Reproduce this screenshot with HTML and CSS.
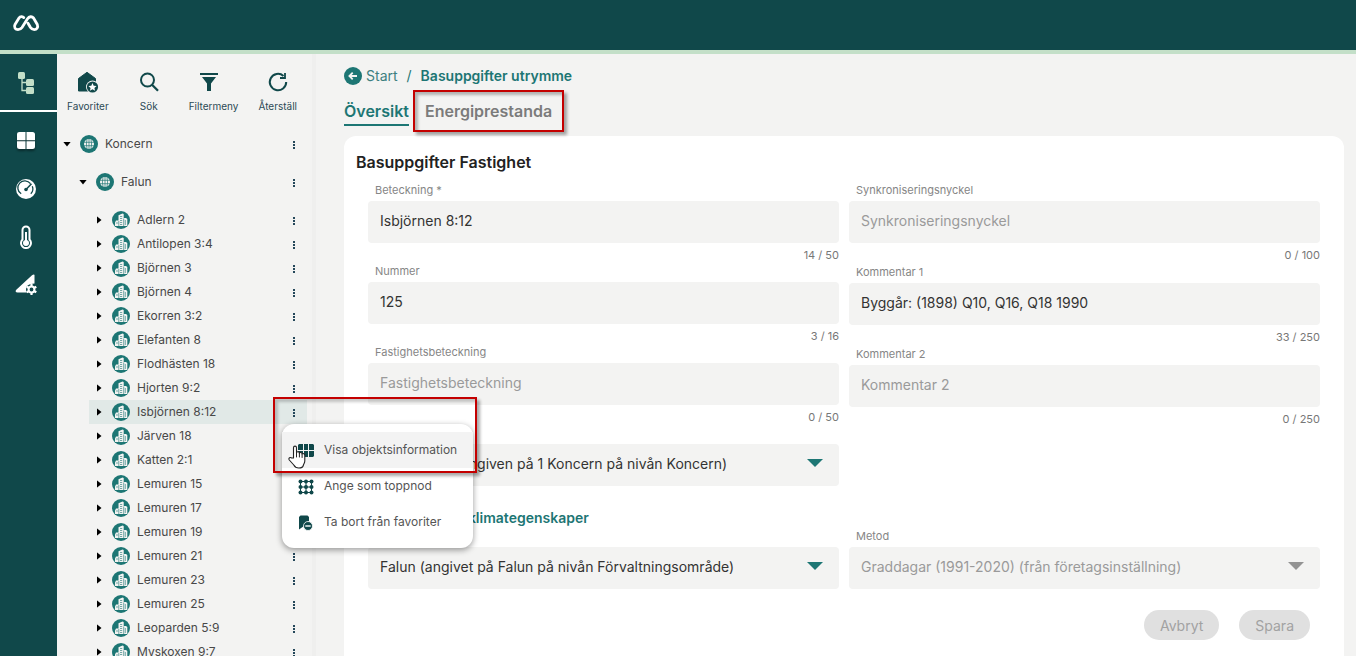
FILE: index.html
```html
<!DOCTYPE html>
<html lang="sv">
<head>
<meta charset="utf-8">
<meta name="viewport" content="width=device-width, initial-scale=1">
<title>Basuppgifter utrymme</title>
<link rel="stylesheet" href="styles.css">
</head>
<body>
<svg class="sprite" aria-hidden="true">
  <symbol id="globe" viewBox="0 0 18 18">
    <circle cx="9" cy="9" r="9" fill="#1d7674"/>
    <circle cx="9" cy="9" r="5" fill="#f3f3f2"/>
    <path d="M4 7.300h10M4 10.700h10M9 4v10M7 4.500Q5.800 9 7 13.500M11 4.500Q12.200 9 11 13.500" fill="none" stroke="#1d7674" stroke-width=".7"/>
  </symbol>
  <symbol id="building" viewBox="0 0 18 18">
    <circle cx="9" cy="9" r="9" fill="#1d7674"/>
    <path d="M6.500 9.500V4.300l4-1.800 1.200.6V7h2.300l1.300 1V15H3V11.500l1-2h2.500z" fill="#f3f3f2"/>
    <path d="M8 5.500h2.200M8 7.500h2.200M8 9.500h2.200M8 11.500h2.200M13.300 9v5M4 12h2.200M11.700 7.500v7.500M6.800 10v5M8 13.500h2.200" fill="none" stroke="#1d7674" stroke-width=".6"/>
  </symbol>
  <symbol id="dots" viewBox="0 0 2 8">
    <path d="M0 0h2v2H0zM0 3h2v2H0zM0 6h2v2H0z" fill="#24475a"/>
  </symbol>
</svg>

<div class="app">
  <header class="topbar">
    <svg class="logo" viewBox="0 0 28 18" aria-label="Logotyp" role="img">
      <g fill="none" stroke="#fff" stroke-width="2.800" stroke-linejoin="round" stroke-linecap="round">
        <path d="M11.800 3.600C10.800 2.200 8.200 2.200 7 4L3 10.500C1.500 13.500 3.500 15.600 6 15.600C8 15.600 9 15 10 13.500L15.500 4.800C17.300 2.200 20 2.200 21.500 4L25.300 10.500C26.500 13.500 24.500 15.600 22.300 15.600C20.500 15.600 19.500 15 18.500 13.500L16 9.200"/>
      </g>
    </svg>
  </header>

  <div class="body">
    <nav class="rail" aria-label="Huvudmeny">
      <a href="#" class="rail-item active" aria-label="Objektträd">
        <svg width="18" height="22" viewBox="0 0 18 22"><g fill="#c3dfc8"><rect x="1" y="0" width="7" height="7" rx="1.500"/><rect x="9" y="7" width="8" height="7" rx="1.500"/><rect x="9" y="15" width="8" height="7" rx="1.500"/></g><path d="M5 7v11.500h5M5 10.500h5" fill="none" stroke="#c3dfc8" stroke-width="1.300"/></svg>
      </a>
      <a href="#" class="rail-item" aria-label="Översikt">
        <svg class="lifted" width="18" height="18" viewBox="0 0 18 18" fill="#fff"><path d="M2.500 0h6v8.300H0V2.500A2.500 2.500 0 0 1 2.500 0zM9.500 0h6A2.500 2.500 0 0 1 18 2.500v5.800H9.500zM0 9.300h8.500V17h-6A2.500 2.500 0 0 1 0 14.500zM9.500 9.300H18v5.200a2.500 2.500 0 0 1-2.500 2.500h-6z"/></svg>
      </a>
      <a href="#" class="rail-item" aria-label="Mätare">
        <svg width="20" height="20" viewBox="0 0 20 20"><circle cx="10" cy="10" r="10" fill="#fff"/><path d="M5.200 14.800A7 7 0 1 1 14.500 4.700M16.300 7.200A7 7 0 0 1 14.800 14.800" fill="none" stroke="#10484a" stroke-width="1.300"/><path d="M10 10.500l5.500-5.800" stroke="#10484a" stroke-width="1.500"/><circle cx="10" cy="10.500" r="1.800" fill="#10484a"/></svg>
      </a>
      <a href="#" class="rail-item" aria-label="Temperatur">
        <svg width="14" height="24" viewBox="0 0 14 24"><path d="M3.500 5a3.500 3.500 0 0 1 7 0v9.500a5 5 0 1 1-7 0z" fill="none" stroke="#fff" stroke-width="2"/><path d="M7 7v10" stroke="#fff" stroke-width="2"/><circle cx="7" cy="18" r="3" fill="#fff"/></svg>
      </a>
      <a href="#" class="rail-item" aria-label="Inställningar">
        <svg width="22" height="22" viewBox="0 0 22 22"><path d="M19.500 1v8.500c-5 0-7.500 3-7 9H2.500c-2 0-2.500-1.500-1.200-2.700L17 1.300c1-1 2.500-1.200 2.500-.3z" fill="#fff"/><circle cx="16.500" cy="15.500" r="5.500" fill="#10484a"/><circle cx="16.500" cy="15.500" r="2.900" fill="none" stroke="#fff" stroke-width="2"/><path d="M16.500 10v2.500M16.500 18.500V21M11.700 12.700l2.300 1.300M19 17l2.300 1.300M11.700 18.300L14 17M19 14l2.300-1.300" stroke="#fff" stroke-width="2.200"/></svg>
      </a>
    </nav>

    <aside class="tree-panel">
      <div class="tools">
        <div class="tool-group">
          <button type="button" class="tool"><svg width="22" height="22" viewBox="0 0 22 22"><path d="M1.500 20V7.500L10 1.300 18.500 7.500V20z" fill="#10484a" stroke="#10484a" stroke-linejoin="round"/><circle cx="15.500" cy="16" r="6.500" fill="#f3f3f2"/><circle cx="15.500" cy="16" r="5.600" fill="#10484a"/><path d="M15.500 12l1.200 2.700 2.900.3-2.200 1.900.7 2.900-2.600-1.500-2.600 1.500.7-2.900-2.200-1.900 2.900-.3z" fill="#fff"/></svg>Favoriter</button>
          <button type="button" class="tool"><svg width="22" height="22" viewBox="0 0 22 22"><circle cx="9.500" cy="9" r="6.500" fill="none" stroke="#10484a" stroke-width="2"/><path d="M14 13.700l6 6" stroke="#10484a" stroke-width="2.300"/></svg>Sök</button>
          <button type="button" class="tool"><svg width="28" height="22" viewBox="0 0 28 22"><path d="M0 2h18v2H0zM2 6h14l-5 6.500V20H7v-7.500z" fill="#10484a"/></svg>Filtermeny</button>
        </div>
        <button type="button" class="tool"><svg width="22" height="22" viewBox="0 0 22 22"><path d="M16.500 5A8.200 8.200 0 1 0 19.200 11" fill="none" stroke="#10484a" stroke-width="2"/><path d="M18 2v5h-5" fill="none" stroke="#10484a" stroke-width="1.800"/></svg>Återställ</button>
      </div>

      <ul class="tree">
        <li class="node root"><span class="caret open"></span><svg class="ico"><use href="#globe"/></svg><span class="name">Koncern</span><button type="button" class="more" aria-label="Meny"><svg><use href="#dots"/></svg></button></li>
        <li class="node area"><span class="caret open"></span><svg class="ico"><use href="#globe"/></svg><span class="name">Falun</span><button type="button" class="more" aria-label="Meny"><svg><use href="#dots"/></svg></button></li>
        <li class="node"><span class="caret"></span><svg class="ico"><use href="#building"/></svg><span class="name">Adlern 2</span><button type="button" class="more" aria-label="Meny"><svg><use href="#dots"/></svg></button></li>
        <li class="node"><span class="caret"></span><svg class="ico"><use href="#building"/></svg><span class="name">Antilopen 3:4</span><button type="button" class="more" aria-label="Meny"><svg><use href="#dots"/></svg></button></li>
        <li class="node"><span class="caret"></span><svg class="ico"><use href="#building"/></svg><span class="name">Björnen 3</span><button type="button" class="more" aria-label="Meny"><svg><use href="#dots"/></svg></button></li>
        <li class="node"><span class="caret"></span><svg class="ico"><use href="#building"/></svg><span class="name">Björnen 4</span><button type="button" class="more" aria-label="Meny"><svg><use href="#dots"/></svg></button></li>
        <li class="node"><span class="caret"></span><svg class="ico"><use href="#building"/></svg><span class="name">Ekorren 3:2</span><button type="button" class="more" aria-label="Meny"><svg><use href="#dots"/></svg></button></li>
        <li class="node"><span class="caret"></span><svg class="ico"><use href="#building"/></svg><span class="name">Elefanten 8</span><button type="button" class="more" aria-label="Meny"><svg><use href="#dots"/></svg></button></li>
        <li class="node"><span class="caret"></span><svg class="ico"><use href="#building"/></svg><span class="name">Flodhästen 18</span><button type="button" class="more" aria-label="Meny"><svg><use href="#dots"/></svg></button></li>
        <li class="node"><span class="caret"></span><svg class="ico"><use href="#building"/></svg><span class="name">Hjorten 9:2</span><button type="button" class="more" aria-label="Meny"><svg><use href="#dots"/></svg></button></li>
        <li class="node selected"><span class="caret"></span><svg class="ico"><use href="#building"/></svg><span class="name">Isbjörnen 8:12</span><button type="button" class="more" aria-label="Meny"><svg><use href="#dots"/></svg></button></li>
        <li class="node"><span class="caret"></span><svg class="ico"><use href="#building"/></svg><span class="name">Järven 18</span><button type="button" class="more" aria-label="Meny"><svg><use href="#dots"/></svg></button></li>
        <li class="node"><span class="caret"></span><svg class="ico"><use href="#building"/></svg><span class="name">Katten 2:1</span><button type="button" class="more" aria-label="Meny"><svg><use href="#dots"/></svg></button></li>
        <li class="node"><span class="caret"></span><svg class="ico"><use href="#building"/></svg><span class="name">Lemuren 15</span><button type="button" class="more" aria-label="Meny"><svg><use href="#dots"/></svg></button></li>
        <li class="node"><span class="caret"></span><svg class="ico"><use href="#building"/></svg><span class="name">Lemuren 17</span><button type="button" class="more" aria-label="Meny"><svg><use href="#dots"/></svg></button></li>
        <li class="node"><span class="caret"></span><svg class="ico"><use href="#building"/></svg><span class="name">Lemuren 19</span><button type="button" class="more" aria-label="Meny"><svg><use href="#dots"/></svg></button></li>
        <li class="node"><span class="caret"></span><svg class="ico"><use href="#building"/></svg><span class="name">Lemuren 21</span><button type="button" class="more" aria-label="Meny"><svg><use href="#dots"/></svg></button></li>
        <li class="node"><span class="caret"></span><svg class="ico"><use href="#building"/></svg><span class="name">Lemuren 23</span><button type="button" class="more" aria-label="Meny"><svg><use href="#dots"/></svg></button></li>
        <li class="node"><span class="caret"></span><svg class="ico"><use href="#building"/></svg><span class="name">Lemuren 25</span><button type="button" class="more" aria-label="Meny"><svg><use href="#dots"/></svg></button></li>
        <li class="node"><span class="caret"></span><svg class="ico"><use href="#building"/></svg><span class="name">Leoparden 5:9</span><button type="button" class="more" aria-label="Meny"><svg><use href="#dots"/></svg></button></li>
        <li class="node"><span class="caret"></span><svg class="ico"><use href="#building"/></svg><span class="name">Myskoxen 9:7</span><button type="button" class="more" aria-label="Meny"><svg><use href="#dots"/></svg></button></li>
      </ul>
    </aside>

    <main class="content">
      <nav class="crumbs" aria-label="Brödsmulor">
        <a href="#" class="crumb-link"><svg width="18" height="18" viewBox="0 0 18 18"><circle cx="9" cy="9" r="9" fill="#1d7674"/><path d="M13 9H5.500M8.700 5.700L5.400 9l3.300 3.300" fill="none" stroke="#f3f3f2" stroke-width="1.800"/></svg>Start</a>
        <span class="sep">/</span>
        <a href="#" class="crumb-current">Basuppgifter utrymme</a>
      </nav>
      <nav class="tabs" aria-label="Flikar">
        <a href="#" class="tab current">Översikt</a>
        <a href="#" class="tab marked">Energiprestanda</a>
      </nav>

      <form class="card">
        <h1 class="title">Basuppgifter Fastighet</h1>
        <div class="columns">
          <div class="column">
            <div class="field"><label for="f1">Beteckning *</label><input id="f1" type="text" value="Isbjörnen 8:12"><span class="count">14 / 50</span></div>
            <div class="field"><label for="f2">Nummer</label><input id="f2" type="text" value="125"><span class="count">3 / 16</span></div>
            <div class="field"><label for="f3">Fastighetsbeteckning</label><input id="f3" type="text" placeholder="Fastighetsbeteckning"><span class="count">0 / 50</span></div>
            <div class="field"><label for="f4">Valuta</label><div class="select"><select id="f4"><option>Koncernen (angiven på 1 Koncern på nivån Koncern)</option></select></div></div>
          </div>
          <div class="column loose">
            <div class="field"><label for="f5">Synkroniseringsnyckel</label><input id="f5" type="text" placeholder="Synkroniseringsnyckel"><span class="count">0 / 100</span></div>
            <div class="field"><label for="f6">Kommentar 1</label><input id="f6" type="text" value="Byggår: (1898) Q10, Q16, Q18 1990"><span class="count">33 / 250</span></div>
            <div class="field"><label for="f7">Kommentar 2</label><input id="f7" type="text" placeholder="Kommentar 2"><span class="count">0 / 250</span></div>
          </div>
        </div>
        <h2 class="subtitle">Utomhus- och klimategenskaper</h2>
        <div class="columns">
          <div class="field"><label for="f8">Ort</label><div class="select"><select id="f8"><option>Falun (angivet på Falun på nivån Förvaltningsområde)</option></select></div></div>
          <div class="field"><label for="f9">Metod</label><div class="select off"><select id="f9" disabled><option>Graddagar (1991-2020) (från företagsinställning)</option></select></div></div>
        </div>
        <div class="actions">
          <button type="button" class="pill" disabled>Avbryt</button>
          <button type="button" class="pill" disabled>Spara</button>
        </div>
      </form>
    </main>
  </div>

  <div class="menu" role="menu">
    <button type="button" class="menu-item hover" role="menuitem"><svg width="18" height="18" viewBox="0 0 18 18" fill="#10484a"><path d="M2 3h4v6H1V4zM7 3h4v6H7zM12 3h4l1 1v5h-5zM1 10h5v6H2l-1-1zM7 10h4v6H7zM12 10h5v5l-1 1h-4z"/></svg><span>Visa objektsinformation</span></button>
    <button type="button" class="menu-item" role="menuitem"><svg width="18" height="18" viewBox="0 0 18 18"><path d="M3.500 4.500h11v11h-11zM9 4.500v11M3.500 10h11" fill="none" stroke="#10484a" stroke-width="1"/><g fill="#10484a"><circle cx="3.500" cy="4.500" r="2"/><circle cx="9" cy="4.500" r="2"/><circle cx="14.500" cy="4.500" r="2"/><circle cx="3.500" cy="10" r="2"/><circle cx="9" cy="10" r="2"/><circle cx="14.500" cy="10" r="2"/><circle cx="3.500" cy="15.500" r="2"/><circle cx="9" cy="15.500" r="2"/><circle cx="14.500" cy="15.500" r="2"/></g></svg><span>Ange som toppnod</span></button>
    <button type="button" class="menu-item" role="menuitem"><svg width="18" height="18" viewBox="0 0 18 18"><path d="M2 16.500V4L3.500 2.500H10.500L12 4V8L7 13z" fill="#10484a"/><circle cx="11" cy="13" r="4.500" fill="#10484a" stroke="#fff" stroke-width=".8"/><path d="M8.300 13h5.400" stroke="#fff" stroke-width="1.400"/></svg><span>Ta bort från favoriter</span></button>
  </div>
  <div class="marker"></div>
  <svg class="pointer" viewBox="0 0 18 24" aria-hidden="true"><path d="M5.500 13V2.800C5.500.5 8.500.5 8.500 2.800V7.500c.5-1.200 2.800-1 2.900.6.700-1 2.600-.7 2.700.8 1-.8 2.700-.2 2.700 1.500V16c0 2-1.500 3.500-1.500 4.500-.5 2-2 2.500-4.500 2.500-3 0-4-1-5-3L1.300 15c-1.200-2 1-3.200 2.400-2z" fill="#fff" stroke="#222" stroke-width="1.100" stroke-linejoin="round"/><path d="M8.500 7.500v4.500M11.400 8v4M14.100 9v3.500" stroke="#222" stroke-width="1" stroke-linecap="round"/></svg>
</div>
</body>
</html>
```
FILE: styles.css
```css
* { box-sizing: border-box; }

body {
  margin: 0;
  font-family: Inter, "Liberation Sans", sans-serif;
  font-size: 12px;
  color: #484848;
  background: #f3f3f2;
}

button, input, select { font: inherit; color: inherit; margin: 0; border: 0; }
button { background: none; padding: 0; cursor: pointer; }
a { text-decoration: none; color: inherit; }
.sprite { position: absolute; width: 0; height: 0; }

.app {
  position: relative;
  display: flex;
  flex-direction: column;
  height: 100vh;
  overflow: hidden;
}

.topbar {
  flex: none;
  display: flex;
  align-items: center;
  padding: 14px 12px 18px;
  background: #10484a;
  border-bottom: 4px solid #c3dfc8;
}
.logo { width: 28px; height: 18px; }

.body { flex: 1; display: flex; min-height: 0; }

/* Icon rail */
.rail {
  flex: none;
  width: 57px;
  display: flex;
  flex-direction: column;
  background: #10484a;
}
.rail-item {
  display: flex;
  align-items: center;
  justify-content: center;
  height: 48px;
  padding: 2px 5px 0 0;
}
.rail-item.active {
  height: 58px;
  border-bottom: 2px solid #fff;
  margin-bottom: 4px;
}
.lifted { filter: drop-shadow(0 2px 1px #0006); }

/* Object tree */
.tree-panel {
  flex: none;
  width: 259px;
  padding: 17px 5px 0 0;
  border-right: 4px solid #efefee;
  overflow: hidden;
}
.tools { display: flex; gap: 20px; padding-left: 10px; }
.tool-group { display: flex; gap: 29px; }
.tool {
  display: flex;
  flex-direction: column;
  align-items: center;
  gap: 5px;
  font-size: 10px;
  line-height: 16px;
  color: #2b4a55;
}
.tree { list-style: none; margin: 11px 0 0; padding: 0; }
.node {
  display: flex;
  align-items: center;
  height: 24px;
  margin-left: 32px;
  padding: 0 12px 0 5px;
}
.node.root { height: 38px; margin-left: 0; }
.node.area { height: 38px; margin-left: 16px; margin-bottom: 7px; }
.node.selected { background: #e1e9e7; }
.caret { flex: none; width: 10px; display: flex; justify-content: center; margin-right: 8px; }
.caret::before {
  content: "";
  width: 5px;
  height: 8px;
  background: #000;
  clip-path: polygon(0 0, 100% 50%, 0 100%);
}
.caret.open::before { width: 8px; height: 5px; clip-path: polygon(0 0, 100% 0, 50% 100%); }
.ico { flex: none; width: 18px; height: 18px; margin-right: 7px; }
.name { flex: 1; padding-bottom: 2px; }
.more { display: flex; padding-top: 2px; }
.more svg { width: 2px; height: 8px; }

/* Main area */
.content {
  flex: 1;
  min-width: 0;
  display: flex;
  flex-direction: column;
  padding: 12px 12px 0 28px;
}
.crumbs {
  display: flex;
  align-items: center;
  gap: 9px;
  font-size: 14px;
  line-height: 20px;
  color: #1d7674;
}
.crumb-link { display: flex; align-items: center; gap: 4px; color: #3d7f80; }
.crumb-current { font-weight: 600; }
.tabs {
  display: flex;
  gap: 16px;
  padding: 14px 0 10px;
  font-size: 16px;
  font-weight: 600;
  line-height: 22px;
  color: #7b7b7b;
}
.tab { position: relative; height: 26px; }
.tab.current { color: #1d7674; border-bottom: 2px solid #1d7674; }
.tab.marked::after {
  content: "";
  position: absolute;
  inset: -10px -12px -6px -12px;
  border: 2px solid #c40000;
  box-shadow: 3px 3px 3px #0005, inset 3px 3px 3px #0004;
}

.card {
  flex: 1;
  background: #fff;
  border-radius: 12px 12px 0 0;
  padding: 16px 24px 0;
}
.title {
  margin: 0 -12px 10px;
  font-size: 16px;
  font-weight: 600;
  line-height: 20px;
  color: #222;
}
.columns { display: grid; grid-template-columns: 1fr 1fr; gap: 10px; }
.column.loose { display: flex; flex-direction: column; gap: 1px; }
.field { display: flex; flex-direction: column; }
.field label {
  margin-bottom: 3px;
  padding-left: 7px;
  font-size: 11px;
  line-height: 16px;
  color: #868686;
}
.field input, .field select {
  width: 100%;
  height: 42px;
  padding: 0 12px 3px;
  border-radius: 4px;
  background: #f3f3f2;
  font-size: 14px;
  color: #333;
  appearance: none;
}
.field input::placeholder { color: #9a9a9a; opacity: 1; }
.field select:disabled { color: #9a9a9a; opacity: 1; }
.count { margin-top: 4px; text-align: right; font-size: 11px; line-height: 16px; color: #777; }
.select { position: relative; }
.select::after {
  content: "";
  position: absolute;
  top: 15px;
  right: 16px;
  width: 16px;
  height: 8px;
  background: #1d7674;
  clip-path: polygon(0 0, 100% 0, 50% 100%);
  pointer-events: none;
}
.select.off::after { background: #939393; }
.subtitle {
  margin: 22px 0 0;
  font-size: 14px;
  font-weight: 600;
  line-height: 20px;
  color: #1d7674;
}
.actions { display: flex; justify-content: flex-end; gap: 20px; padding: 21px 10px 0; }
.pill {
  height: 30px;
  padding: 0 16px;
  border-radius: 15px;
  background: #e0e0e0;
  font-size: 14px;
  color: #a2a2a2;
}

/* Context menu over the tree */
.menu {
  position: absolute;
  left: 282px;
  top: 424px;
  width: 191px;
  padding: 8px 0;
  display: flex;
  flex-direction: column;
  background: #fff;
  border-radius: 12px;
  box-shadow: 0 2px 6px #0006;
}
.menu-item {
  display: flex;
  align-items: center;
  gap: 9px;
  height: 36px;
  padding-left: 15px;
  color: #555;
  white-space: nowrap;
}
.menu-item span { padding-bottom: 2px; }
.menu-item.hover { background: #f3f3f3; }
.marker {
  position: absolute;
  left: 273px;
  top: 397px;
  width: 204px;
  height: 76px;
  border: 2px solid #c40000;
  box-shadow: 3px 3px 3px #0005, inset 3px 3px 3px #0003;
}
.pointer { position: absolute; left: 288px; top: 445px; width: 18px; height: 24px; }
```
